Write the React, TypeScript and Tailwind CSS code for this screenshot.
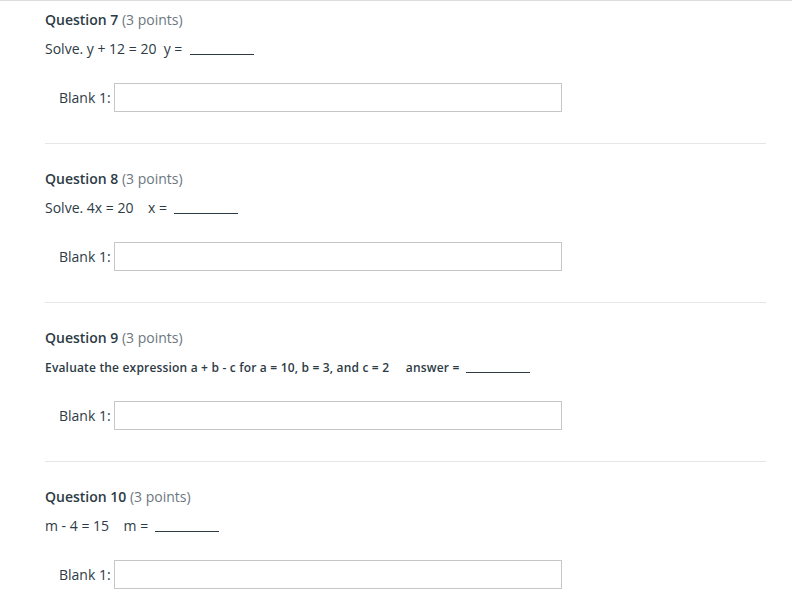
import React from "react";

type Question = {
  num: number;
  points: number;
  text: string;
  answerLabel: string;
  small?: boolean;
};

const questions: Question[] = [
  { num: 7, points: 3, text: "Solve. y + 12 = 20", answerLabel: "y =" },
  { num: 8, points: 3, text: "Solve. 4x = 20", answerLabel: "x =" },
  {
    num: 9,
    points: 3,
    text: "Evaluate the expression a + b - c for a = 10, b = 3, and c = 2",
    answerLabel: "answer =",
    small: true,
  },
  { num: 10, points: 3, text: "m - 4 = 15", answerLabel: "m =" },
];

const QuestionBlock = ({ q, first }: { q: Question; first: boolean }) => {
  return (
    <div
      className={`${first ? "pt-[9px]" : "pt-[25px]"} pb-[31px] border-b border-[#e6e6e6]`}
    >
      <div className="h-5 leading-5 text-[14px] whitespace-nowrap">
        <span className="font-semibold text-[#2d3b45]">Question {q.num}</span>{" "}
        <span className="text-[#6b7780]">({q.points} points)</span>
      </div>
      <div
        className={`h-5 whitespace-pre text-[#2d3b45] ${
          q.small
            ? "mt-[11px] leading-[18px] text-[12px] font-semibold tracking-[0.18px]"
            : "mt-[9px] leading-5 text-[14px]"
        }`}
      >
        {q.text}
        {q.small ? "     " : q.num === 7 ? "  " : "    "}
        {q.answerLabel}{"  "}
        <span className="inline-block w-[64px] border-b border-[#2d3b45] align-[-1px]"></span>
      </div>
      <div className={`${q.small ? "mt-[22px]" : "mt-[24px]"} flex items-center pl-[14px]`}>
        <span className="text-[14px] text-[#2d3b45] w-[52px]">Blank 1:</span>
        <input
          type="text"
          className="ml-[3px] h-[29px] w-[448px] border border-[#c6c6c6] bg-white outline-none"
        />
      </div>
    </div>
  );
};

export default function App() {
  return (
    <div
      className="w-[792px] h-[599px] bg-white border-t border-[#dcdcdc] overflow-hidden"
      style={{ fontFamily: '"Open Sans", "Liberation Sans", sans-serif' }}
    >
      <div className="ml-[45px] w-[721px]">
        {questions.map((q, i) => (
          <QuestionBlock key={q.num} q={q} first={i === 0} />
        ))}
      </div>
    </div>
  );
}
